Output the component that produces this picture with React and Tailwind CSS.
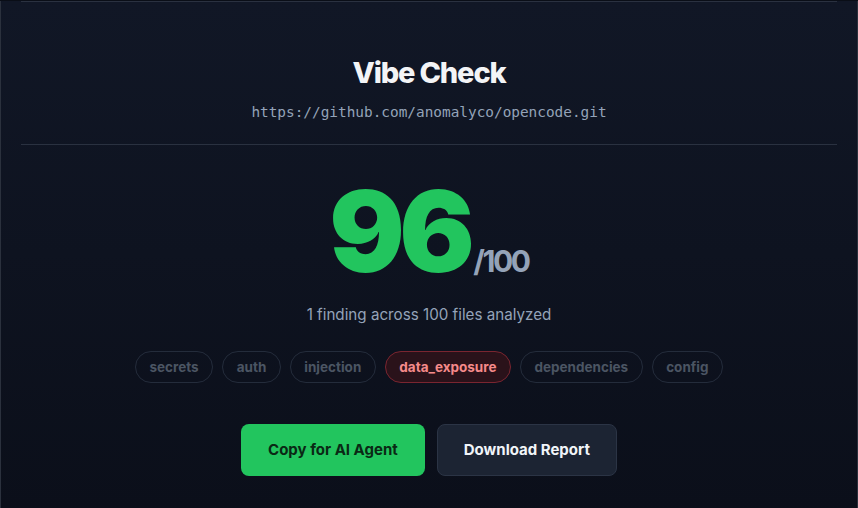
export default function App() {
  const pills = ["secrets", "auth", "injection", "data_exposure", "dependencies", "config"];
  return (
    <div
      className="h-[508px] w-full overflow-hidden bg-[#0a0e17]"
      style={{ fontFamily: "Inter, 'Noto Sans', sans-serif" }}
    >
      <div className="h-full border-x border-[#2b313d] bg-gradient-to-b from-[#111726] to-[#0b0f1a] px-5">
        <div className="mt-px h-px bg-[#2a3140]" />
        <div className="flex flex-col items-center pt-[54px] pb-[22px]">
          <h1 className="text-[29px] font-extrabold leading-[34px] tracking-[-0.04em] text-[#f3f4f6]">
            Vibe Check
          </h1>
          <div
            className="mt-[12px] text-[14.4px] leading-5 text-[#94a3b8]"
            style={{ fontFamily: "'DejaVu Sans Mono', monospace" }}
          >
            https://github.com/anomalyco/opencode.git
          </div>
        </div>
        <div className="h-px bg-[#2a3140]" />
        <div className="flex flex-col items-center pt-[30px]">
          <div className="flex items-baseline">
            <span className="text-[112px] font-black leading-none tracking-tighter text-[#22c55e]">
              96
            </span>
            <span className="ml-[4px] text-[30px] font-bold leading-none tracking-[-0.08em] text-[#94a3b8]">
              /100
            </span>
          </div>
          <p className="mt-[16px] text-[15.2px] leading-6 text-[#94a3b8]">
            1 finding across 100 files analyzed
          </p>
          <div className="mt-[24px] flex gap-[9px]">
            {pills.map((p) =>
              p === "data_exposure" ? (
                <span
                  key={p}
                  className="flex h-8 items-center rounded-full border border-[#7a2530] bg-[#2a121a] px-[13.5px] text-[13.5px] font-bold text-[#f58a8a]"
                >
                  {p}
                </span>
              ) : (
                <span
                  key={p}
                  className="flex h-8 items-center rounded-full border border-[#242c3b] px-[13.5px] text-[13.5px] font-bold text-[#4b5563]"
                >
                  {p}
                </span>
              )
            )}
          </div>
          <div className="mt-[41px] flex gap-3">
            <button className="flex h-[52px] items-center rounded-lg bg-[#22c55e] px-[27px] text-[15px] font-bold text-[#0a2915]">
              Copy for AI Agent
            </button>
            <button className="flex h-[52px] items-center rounded-lg border border-[#2b3445] bg-[#1c2433] px-[26px] text-[15px] font-bold text-[#f1f5f9]">
              Download Report
            </button>
          </div>
        </div>
      </div>
    </div>
  );
}
